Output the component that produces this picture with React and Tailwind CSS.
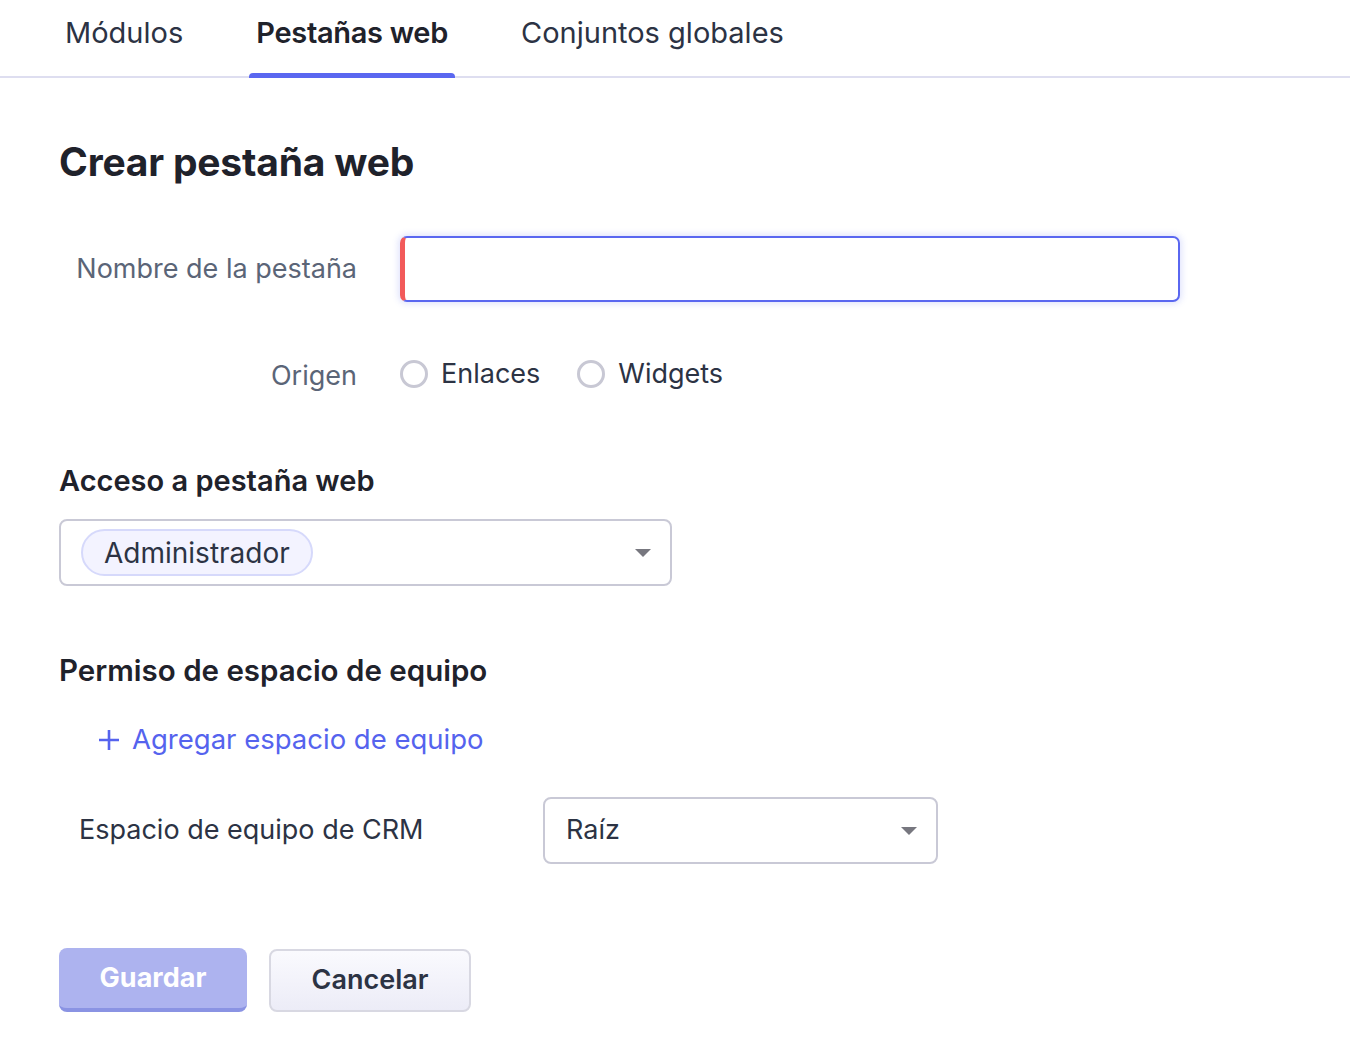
import React from 'react';

function Caret() {
  return (
    <svg width="18" height="10" viewBox="0 0 18 10" className="shrink-0">
      <path d="M1 1h16l-8 8z" fill="#77777f" />
    </svg>
  );
}

function Radio({ label }) {
  return (
    <label className="flex items-center gap-[13px]">
      <span className="w-[28px] h-[28px] rounded-full border-[3px] border-[#c8c8d4] bg-white" />
      <span className="text-[#2c3344]">{label}</span>
    </label>
  );
}

export default function App() {
  return (
    <div
      className="w-[1350px] h-[1044px] bg-white text-[27px] text-[#2c3344]"
      style={{ fontFamily: 'Inter, Lato, sans-serif' }}
    >
      <div className="flex items-end h-[78px] border-b-2 border-[#dedef0] pl-[58px] text-[29px]">
        <div className="flex">
          <div className="px-[7px] h-[76px] flex items-center pb-[10px] text-[#2c3344]">Módulos</div>
          <div className="ml-[59px] relative px-[7px] h-[76px] flex items-center pb-[10px] font-semibold tracking-[-0.3px] text-[#1f222b]">
            Pestañas web
            <span className="absolute left-0 right-0 bottom-[-2px] h-[5px] rounded-t-[4px] bg-[#5a67f0]" />
          </div>
          <div className="ml-[59px] px-[7px] h-[76px] flex items-center pb-[10px]">Conjuntos globales</div>
        </div>
      </div>

      <div className="pl-[59px]">
        <h1 className="mt-[58px] text-[39px] font-bold text-[#1f222b] leading-[52px] tracking-[-0.2px]">Crear pestaña web</h1>

        <div className="mt-[48px] flex items-center">
          <div className="w-[298px] text-right text-[#5b6577]">Nombre de la pestaña</div>
          <div className="ml-[43px] w-[780px] h-[66px] rounded-[7px] border-2 border-[#5a67f0] border-l-[5px] border-l-[#f25a5a] shadow-[0_0_6px_2px_rgba(90,103,240,0.18)] bg-white" />
        </div>

        <div className="mt-[52px] flex items-center h-[40px]">
          <div className="w-[298px] text-right text-[#5b6577] pt-[4px]">Origen</div>
          <div className="ml-[43px] flex items-center gap-[37px]">
            <Radio label="Enlaces" />
            <Radio label="Widgets" />
          </div>
        </div>

        <h2 className="mt-[67px] text-[29px] font-semibold text-[#1f222b] leading-[40px]">Acceso a pestaña web</h2>
        <div className="mt-[18px] w-[613px] h-[67px] rounded-[8px] border-2 border-[#c9c9d6] flex items-center pl-[20px] pr-[18px]">
          <span className="h-[47px] px-[21px] rounded-full bg-[#f3f3ff] border-2 border-[#d6d9fb] flex items-center text-[28px] text-[#2c3344]">
            Administrador
          </span>
          <span className="ml-auto"><Caret /></span>
        </div>

        <h2 className="mt-[64px] text-[29.5px] font-semibold text-[#1f222b] leading-[40px]">Permiso de espacio de equipo</h2>
        <div className="mt-[30px] ml-[39px] h-[40px] flex items-center gap-[12px] text-[27.5px] text-[#5563ee]">
          <svg width="22" height="22" viewBox="0 0 22 22">
            <path d="M11 1v20M1 11h20" stroke="#5563ee" strokeWidth="2.6" />
          </svg>
          <span>Agregar espacio de equipo</span>
        </div>

        <div className="mt-[37px] flex items-center">
          <div className="ml-[20px] w-[464px]">Espacio de equipo de CRM</div>
          <div className="w-[395px] h-[67px] rounded-[8px] border-2 border-[#c9c9d6] flex items-center pl-[21px] pr-[18px]">
            <span>Raíz</span>
            <span className="ml-auto"><Caret /></span>
          </div>
        </div>

        <div className="mt-[84px] flex items-center gap-[22px]">
          <button className="w-[188px] h-[64px] rounded-[8px] bg-[#adb3ef] border-b-[4px] border-[#8a93e3] text-white font-bold">
            Guardar
          </button>
          <button className="w-[202px] h-[63px] rounded-[8px] border-2 border-[#d8d8e2] bg-gradient-to-b from-[#fafafe] to-[#ececf7] text-[#2c3344] font-semibold">
            Cancelar
          </button>
        </div>
      </div>
    </div>
  );
}
